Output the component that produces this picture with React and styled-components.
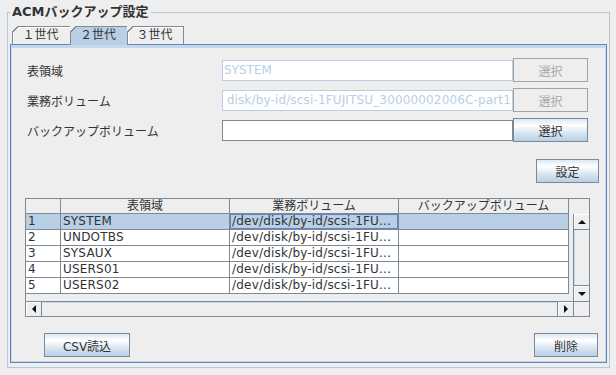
import React from 'react';
import styled, { createGlobalStyle, css } from 'styled-components';

const GlobalStyle = createGlobalStyle`
  html, body { margin: 0; padding: 0; background: #eeeeee; }
  body {
    font-family: "DejaVu Sans", "Noto Sans CJK JP", sans-serif;
    font-size: 12px;
    color: #333333;
  }
  * { box-sizing: border-box; }
`;

const Frame = styled.div`
  width: 616px;
  height: 375px;
  background: #eeeeee;
  padding: 12px 0 0 7px;
`;

const Group = styled.div`
  position: relative;
  width: 603px;
  height: 356px;
  border: 1px solid #b4c8dc;
  padding: 13px 2px 4px 2px;
  display: flex;
  flex-direction: column;
`;

const Legend = styled.div`
  position: absolute;
  left: 2px;
  top: -9px;
  padding: 0 2px;
  line-height: 16px;
  background: #eeeeee;
  font-weight: bold;
  font-size: 13px;
  color: #333333;
`;

const TabRow = styled.div`
  display: flex;
  align-items: flex-end;
  height: 18px;
  margin-left: 2px;
  position: relative;
  z-index: 1;
`;

const Tab = styled.div`
  position: relative;
  width: ${p => p.$w}px;
  height: ${p => (p.$selected ? 19 : 18)}px;
  margin-bottom: ${p => (p.$selected ? -1 : 0)}px;
  border-top: 1px solid #7b8b9c;
  border-left: 1px solid #7b8b9c;
  border-right: ${p => (p.$last ? '1px solid #7b8b9c' : 'none')};
  background: ${p => (p.$selected ? '#b8cfe5' : '#eeeeee')};
  box-shadow: ${p => (p.$selected ? 'none' : 'inset 1px 1px 0 #ffffff')};
  display: flex;
  align-items: flex-start;
  justify-content: center;
  padding: 1px 2px 0 0;
  line-height: 15px;
  font-size: 12px;
  color: #333333;
  &::before {
    content: '';
    position: absolute;
    left: -1px;
    top: -1px;
    width: 7px;
    height: 7px;
    background: linear-gradient(
      to bottom right,
      #eeeeee 0,
      #eeeeee calc(50% - 0.8px),
      #7b8b9c calc(50% - 0.8px),
      #7b8b9c calc(50% + 0.4px),
      transparent calc(50% + 0.4px)
    );
  }
`;

const Panel = styled.div`
  width: 597px;
  height: 319px;
  border: 1px solid #6382bf;
  box-shadow: inset 0 3px 0 #c4d7eb, inset 1px 0 0 #c4d7eb, inset -1px 0 0 #c4d7eb,
    inset 0 -1px 0 #c4d7eb;
  display: flex;
  flex-direction: column;
  padding-top: 13px;
`;

const Form = styled.div`
  display: flex;
  flex-direction: column;
  gap: 6px;
  padding-left: 16px;
`;

const FormRow = styled.div`
  display: flex;
  align-items: center;
  height: 24px;
`;

const Label = styled.div`
  width: 195px;
  font-size: 12px;
  color: #333333;
`;

const Field = styled.div`
  width: 291px;
  height: 21px;
  background: #ffffff;
  border: 1px solid ${p => (p.$disabled ? '#b8cfe5' : '#7a8a99')};
  color: ${p => (p.$disabled ? '#b8cfe5' : '#333333')};
  display: flex;
  align-items: center;
  justify-content: ${p => (p.$end ? 'flex-end' : 'flex-start')};
  overflow: hidden;
  white-space: nowrap;
  padding: 0 1px;
  font-size: 12px;
  line-height: 19px;
  letter-spacing: ${p => (p.$end ? '0.15px' : '0')};
`;

const Button = styled.button`
  width: ${p => p.$w}px;
  height: 24px;
  margin: 0;
  padding: 0;
  font-family: inherit;
  font-size: 12px;
  color: #333333;
  border: 1px solid #7a8a99;
  background: linear-gradient(
    to bottom,
    #dde8f3 0%,
    #ffffff 30%,
    #dde8f3 60%,
    #b8cfe5 100%
  );
  display: flex;
  align-items: center;
  justify-content: center;
  &:disabled {
    background: #eeeeee;
    border-color: #a3a3a3;
    color: #a8a8a8;
  }
`;

const SettingsRow = styled.div`
  display: flex;
  justify-content: flex-end;
  margin-top: 17px;
  padding-right: 7px;
`;

const ScrollPane = styled.div`
  margin-top: 15px;
  margin-left: 14px;
  width: 565px;
  height: 119px;
  border: 1px solid #7a8a99;
  display: grid;
  grid-template-columns: 547px 16px;
  grid-template-rows: 15px 87px 15px;
  background: #eeeeee;
`;

const Header = styled.div`
  display: flex;
  background: #eeeeee;
`;

const HeadCell = styled.div`
  width: ${p => p.$w}px;
  height: 15px;
  border-right: 1px solid #7a8a99;
  border-bottom: 1px solid #7a8a99;
  text-align: center;
  font-size: 12px;
  line-height: 14px;
  color: #333333;
  overflow: hidden;
  white-space: nowrap;
`;

const Corner = styled.div`
  background: #eeeeee;
  ${p =>
    p.$bottom &&
    css`
      border-top: 1px solid #7a8a99;
      border-left: 1px solid #7a8a99;
    `}
`;

const Viewport = styled.div`
  background: #eeeeee;
  overflow: hidden;
`;

const Row = styled.div`
  display: flex;
  height: 16px;
  background: ${p => (p.$selected ? '#b8cfe5' : '#ffffff')};
  width: 543px;
`;

const Cell = styled.div`
  width: ${p => p.$w}px;
  height: 16px;
  border-right: 1px solid #7a8a99;
  border-bottom: 1px solid #7a8a99;
  padding-left: 2px;
  font-size: 12px;
  line-height: 15px;
  color: #333333;
  white-space: nowrap;
  overflow: hidden;
  letter-spacing: 0.2px;
  ${p =>
    p.$focus &&
    css`
      box-shadow: inset 0 0 0 1px #6382bf;
    `}
`;

const VScroll = styled.div`
  display: flex;
  flex-direction: column;
  border-left: 1px solid #7a8a99;
`;

const HScroll = styled.div`
  display: flex;
  border-top: 1px solid #7a8a99;
`;

const Track = styled.div`
  flex: 1;
  background: #eeeeee;
  box-shadow: ${p => (p.$vertical ? 'inset 1px 0 0 #c4d7eb' : 'inset 0 1px 0 #c4d7eb')};
`;

const ArrowBtn = styled.div`
  width: ${p => (p.$vertical ? 15 : 16)}px;
  height: ${p => (p.$vertical ? 16 : 14)}px;
  flex: none;
  background: #eeeeee;
  display: flex;
  align-items: center;
  justify-content: center;
  box-shadow: inset 1px 1px 0 #ffffff;
  ${p => p.$side === 'top' && css`border-bottom: 1px solid #7a8a99;`}
  ${p => p.$side === 'bottom' && css`border-top: 1px solid #7a8a99;`}
  ${p => p.$side === 'left' && css`border-right: 1px solid #7a8a99;`}
  ${p => p.$side === 'right' && css`border-left: 1px solid #7a8a99;`}
`;

const BottomRow = styled.div`
  display: flex;
  justify-content: space-between;
  margin-top: 16px;
  padding-left: 33px;
  padding-right: 8px;
`;

const Tri = ({ dir }) => {
  const vertical = dir === 'up' || dir === 'down';
  const w = vertical ? 8 : 4;
  const h = vertical ? 4 : 8;
  const pts = {
    up: '0,4 8,4 4,0',
    down: '0,0 8,0 4,4',
    left: '4,0 4,8 0,4',
    right: '0,0 0,8 4,4',
  }[dir];
  return (
    <svg width={w} height={h} viewBox={`0 0 ${w} ${h}`}>
      <polygon points={pts} fill="#111" />
    </svg>
  );
};

const colWidths = [35, 169, 169, 170];
const headers = ['', '表領域', '業務ボリューム', 'バックアップボリューム'];
const rows = [
  ['1', 'SYSTEM', '/dev/disk/by-id/scsi-1FU...', ''],
  ['2', 'UNDOTBS', '/dev/disk/by-id/scsi-1FU...', ''],
  ['3', 'SYSAUX', '/dev/disk/by-id/scsi-1FU...', ''],
  ['4', 'USERS01', '/dev/disk/by-id/scsi-1FU...', ''],
  ['5', 'USERS02', '/dev/disk/by-id/scsi-1FU...', ''],
];

export default function App() {
  return (
    <>
      <GlobalStyle />
      <Frame>
        <Group>
          <Legend>ACMバックアップ設定</Legend>
          <TabRow>
            <Tab $w={58}>１世代</Tab>
            <Tab $w={57} $selected>２世代</Tab>
            <Tab $w={57} $last>３世代</Tab>
          </TabRow>
          <Panel>
            <Form>
              <FormRow>
                <Label>表領域</Label>
                <Field $disabled>SYSTEM</Field>
                <Button $w={75} disabled>選択</Button>
              </FormRow>
              <FormRow>
                <Label>業務ボリューム</Label>
                <Field $disabled $end>disk/by-id/scsi-1FUJITSU_30000002006C-part1</Field>
                <Button $w={75} disabled>選択</Button>
              </FormRow>
              <FormRow>
                <Label>バックアップボリューム</Label>
                <Field />
                <Button $w={75}>選択</Button>
              </FormRow>
            </Form>
            <SettingsRow>
              <Button $w={63}>設定</Button>
            </SettingsRow>
            <ScrollPane>
              <Header>
                {headers.map((h, i) => (
                  <HeadCell key={i} $w={colWidths[i]}>{h}</HeadCell>
                ))}
              </Header>
              <Corner />
              <Viewport>
                {rows.map((r, ri) => (
                  <Row key={ri} $selected={ri === 0}>
                    {r.map((c, ci) => (
                      <Cell key={ci} $w={colWidths[ci]} $focus={ri === 0 && ci === 2}>
                        {c}
                      </Cell>
                    ))}
                  </Row>
                ))}
              </Viewport>
              <VScroll>
                <ArrowBtn $vertical $side="top"><Tri dir="up" /></ArrowBtn>
                <Track $vertical />
                <ArrowBtn $vertical $side="bottom"><Tri dir="down" /></ArrowBtn>
              </VScroll>
              <HScroll>
                <ArrowBtn $side="left"><Tri dir="left" /></ArrowBtn>
                <Track />
                <ArrowBtn $side="right"><Tri dir="right" /></ArrowBtn>
              </HScroll>
              <Corner $bottom />
            </ScrollPane>
            <BottomRow>
              <Button $w={86}>CSV読込</Button>
              <Button $w={64}>削除</Button>
            </BottomRow>
          </Panel>
        </Group>
      </Frame>
    </>
  );
}
